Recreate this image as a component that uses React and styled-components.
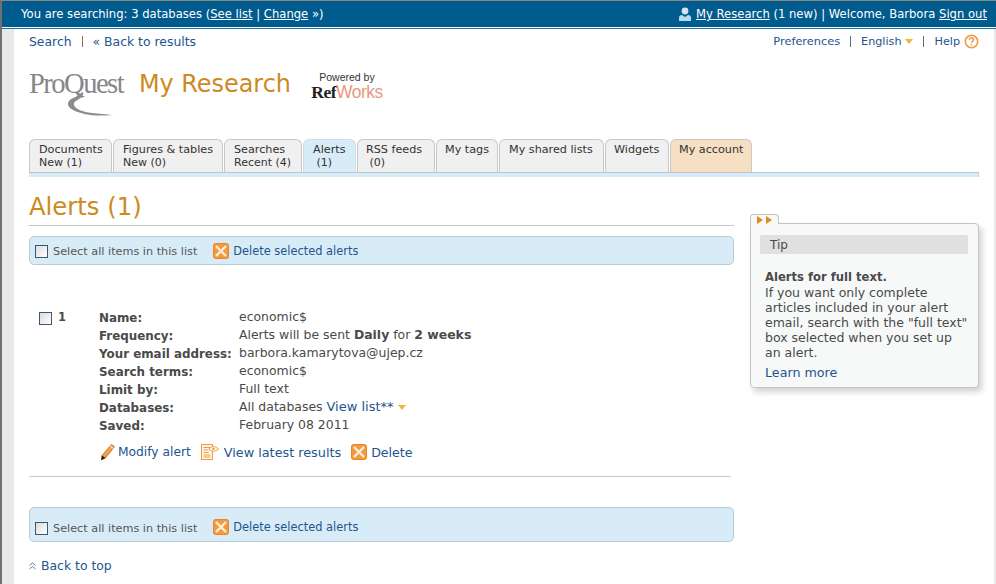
import React from 'react';
import styled, { createGlobalStyle } from 'styled-components';

const GlobalStyle = createGlobalStyle`
    html, body {
        margin: 0;
        padding: 0;
        background: #e8e8e8;
    }
    body {
        font-family: "DejaVu Sans", Verdana, sans-serif;
        font-size: 12px;
        color: #4a4a4a;
    }
`;

const Page = styled.div`
    width: 996px;
    height: 584px;
    overflow: hidden;
    box-sizing: border-box;
    border-top: 1px solid #8a8a80;
    border-left: 2px solid #707070;
    display: flex;
    flex-direction: column;
`;

const TopBar = styled.div`
    height: 26px;
    flex: none;
    background: #005b8e;
    border-bottom: 1px solid #fff;
    box-shadow: 0 1px 0 #1d6f9c;
    color: #fff;
    display: flex;
    justify-content: space-between;
    align-items: center;
    padding: 0 9px 0 19px;
    font-size: 11.6px;
    white-space: nowrap;

    a {
        color: #fff;
        text-decoration: underline;
    }
`;

const TopRight = styled.div`
    display: flex;
    align-items: center;
    gap: 4px;
`;

const Body = styled.div`
    flex: 1;
    margin: 1px 2px 0 12px;
    background: #fff;
    padding: 0 15px;
`;

const NavRow = styled.div`
    display: flex;
    justify-content: space-between;
    align-items: center;
    height: 24px;
`;

const NavGroup = styled.div`
    display: flex;
    align-items: center;
    gap: ${p => p.$gap || 10}px;
    font-size: ${p => p.$size || 12}px;
`;

const Link = styled.a`
    color: #22558f;
    font-size: ${p => p.$size ? `${p.$size}px` : 'inherit'};
    white-space: nowrap;
`;

const Pipe = styled.span`
    width: 1px;
    height: 11px;
    background: ${p => p.$brown ? '#a06a40' : '#5a7088'};
`;

const BrandRow = styled.div`
    display: flex;
    align-items: flex-start;
    height: 71px;
    margin-top: 15px;
`;

const ProQuestLogo = styled.div`
    position: relative;
    width: 110px;
    height: 50px;
    padding-top: 2px;
    box-sizing: border-box;
    color: #87878b;
    font-family: "Liberation Serif", serif;
    font-size: 28.6px;
    letter-spacing: -1.55px;
    line-height: 28px;
    white-space: nowrap;

    svg {
        position: absolute;
        left: 39px;
        top: 24px;
    }
`;

const BrandTitle = styled.div`
    color: #cc8a22;
    font-size: 23.9px;
    line-height: 28px;
    margin-top: 2px;
    white-space: nowrap;
    width: 173px;
`;

const RefBlock = styled.div`
    display: flex;
    flex-direction: column;
    align-items: center;
    width: 70px;
    padding-top: 3px;
`;

const Powered = styled.div`
    color: #333;
    font-family: "Liberation Sans", sans-serif;
    font-size: 10.5px;
    line-height: 12px;
`;

const RefWorks = styled.div`
    font-family: "Liberation Sans", sans-serif;
    font-size: 17.5px;
    line-height: 19px;
    letter-spacing: -.5px;
    white-space: nowrap;
    color: #e9977f;

    b {
        font-family: "Liberation Serif", serif;
        color: #222;
    }
`;

const Tabs = styled.div`
    display: flex;
    gap: 1px;
    height: 33px;
    align-items: stretch;
`;

const Tab = styled.div`
    width: ${p => p.$w}px;
    box-sizing: border-box;
    background: ${p => p.$active ? '#d8ecf7' : p.$account ? '#f7dfc3' : '#f0f0f0'};
    border: 1px solid #c8c8c8;
    border-bottom: none;
    border-color: ${p => p.$active ? '#cddfe9' : '#c8c8c8'};
    border-radius: 6px 6px 0 0;
    color: #333;
    font-size: 11.2px;
    line-height: 13px;
    padding: 3px 0 0 ${p => p.$pad || 9}px;
    white-space: pre;

    small {
        display: block;
        font-size: 11px;
    }
`;

const TabStrip = styled.div`
    height: 4px;
    background: #d8ecf7;
    border-top: 1px solid #b8c8d2;
    border-right: 1px solid #ccc;
`;

const Columns = styled.div`
    display: flex;
    align-items: flex-start;
    justify-content: space-between;
`;

const Main = styled.div`
    width: 705px;
`;

const Heading = styled.h1`
    margin: 16px 0 0;
    height: 32px;
    color: #cc8a22;
    font-size: 24.3px;
    font-weight: 400;
    line-height: 28px;
    border-bottom: 1px solid #c4c4c4;
`;

const ActionBar = styled.div`
    box-sizing: border-box;
    height: ${p => p.$h}px;
    margin-top: ${p => p.$top}px;
    padding: ${p => p.$pt || 0}px 0 0 5px;
    background: #d8ecf7;
    border: 1px solid #b8cad6;
    border-radius: 5px;
    display: flex;
    align-items: center;
`;

const Check = styled.span`
    flex: none;
    width: 11px;
    height: 11px;
    margin-top: ${p => p.$mt || 0}px;
    border: 1px solid #3c5870;
    background: linear-gradient(135deg, #dcdcdc, #fff);
`;

const SelectLabel = styled.span`
    margin: 2px 16px 0 5px;
    font-size: 11.25px;
    color: #555;
    white-space: nowrap;
`;

const IconLink = styled(Link)`
    display: inline-flex;
    align-items: center;
    gap: ${p => p.$gap || 4}px;
    margin-right: ${p => p.$mr || 0}px;
`;

const Item = styled.div`
    display: flex;
    margin-top: 45px;
    padding-left: 10px;
`;

const ItemNum = styled.div`
    width: 60px;
    flex: none;
    display: flex;
    gap: 6px;
    padding-top: 2px;
    font-weight: 700;
    font-size: 11.6px;
    line-height: 11px;
    color: #4a4a4a;
`;

const Fields = styled.dl`
    margin: 0;
    display: grid;
    grid-template-columns: 140px 1fr;
    grid-auto-rows: 18px;
    font-size: 12.45px;
    line-height: 16px;

    dt {
        font-weight: 700;
        font-size: 11.9px;
        white-space: nowrap;
    }

    dd {
        margin: -1px 0 0;
        white-space: nowrap;
    }
`;

const Caret = styled.span`
    display: inline-block;
    width: 0;
    height: 0;
    margin-left: 4px;
    vertical-align: 1px;
    border-left: 4px solid transparent;
    border-right: 4px solid transparent;
    border-top: 5px solid #f2b53a;
`;

const Actions = styled.div`
    display: flex;
    align-items: center;
    height: 20px;
    margin: 6px 0 0 1px;
`;

const Rule = styled.div`
    height: 1px;
    width: 702px;
    background: #c8c8c8;
    margin-top: 14px;
`;

const BackTop = styled(Link)`
    display: flex;
    align-items: center;
    gap: 5px;
    margin-top: 16px;
    font-size: 12.4px;
    line-height: 16px;
`;

const TipWrap = styled.div`
    width: 229px;
    margin: 37px 0 0 0;
    position: relative;
`;

const TipTab = styled.div`
    width: 29px;
    height: 10px;
    box-sizing: border-box;
    margin-bottom: -1px;
    position: relative;
    z-index: 1;
    background: #f7f9f9;
    border: 1px solid #c4c4c4;
    border-bottom: none;
    border-radius: 4px 4px 0 0;
    display: flex;
    gap: 3px;
    padding: 1px 0 0 6px;

    i {
        width: 0;
        height: 0;
        border-left: 6px solid #e08a1e;
        border-top: 4px solid transparent;
        border-bottom: 4px solid transparent;
    }
`;

const TipBox = styled.div`
    box-sizing: border-box;
    height: 165px;
    background: #f7f9f9;
    border: 1px solid #c4c4c4;
    border-radius: 0 4px 4px 4px;
    box-shadow: 3px 4px 6px rgba(0, 0, 0, .18);
    padding: 11px 10px 0 9px;
`;

const TipTitle = styled.div`
    height: 19px;
    background: #e0e0e0;
    border-radius: 2px 2px 0 0;
    font-size: 12px;
    line-height: 21px;
    padding-left: 10px;
`;

const TipText = styled.div`
    margin: 15px 0 0 5px;
    font-size: 12.5px;
    line-height: 15px;
    white-space: nowrap;

    b {
        font-size: 11.6px;
    }
`;

const TipMore = styled(Link)`
    display: block;
    margin: 5px 0 0 5px;
    font-size: 12.7px;
    line-height: 16px;
`;

const HelpIcon = () => (
    <svg width="15" height="15" viewBox="0 0 15 15">
        <circle cx="7.5" cy="7.5" r="6.2" fill="#fff" stroke="#ee9a45" strokeWidth="1.6" />
        <path d="M5.4 5.8c0-1.3 1-2 2.1-2s2.1.7 2.1 1.9c0 1.5-2 1.6-2 3.2" fill="none" stroke="#ee9a45" strokeWidth="1.5" />
        <rect x="6.8" y="10" width="1.5" height="1.5" fill="#ee9a45" />
    </svg>
);

const PersonIcon = () => (
    <svg width="14" height="15" viewBox="0 0 14 15">
        <circle cx="7" cy="4" r="3.4" fill="#cfe6f3" />
        <path d="M1 14V10.5C1 8.8 2.6 8 4 8l3 2 3-2c1.4 0 3 .8 3 2.5V14z" fill="#b7d9ec" />
    </svg>
);

const DeleteIcon = () => (
    <svg width="16" height="16" viewBox="0 0 16 16">
        <rect x=".5" y=".5" width="15" height="15" rx="2" fill="#f59a3c" stroke="#e8842a" />
        <path d="M3 3l10 10M13 3L3 13" stroke="#fdeedd" strokeWidth="2.4" />
    </svg>
);

const PencilIcon = () => (
    <svg width="15" height="17" viewBox="0 0 15 17">
        <path d="M11.500 .5l3 2.200-9 11.300-4.200 2L2 11.500z" fill="#f2a24a" stroke="#b8691c" strokeWidth=".8" />
        <path d="M2 11.500l3.500 2.500-4.200 2z" fill="#222" />
        <path d="M10.300 2.200l3 2.200" stroke="#fff" strokeWidth="1" />
    </svg>
);

const ResultsIcon = () => (
    <svg width="18" height="16" viewBox="0 0 18 16">
        <rect x=".5" y=".5" width="11" height="15" fill="#fff6e8" stroke="#ef9d3f" />
        <path d="M2.5 3.5h7M2.5 6h5M2.5 8.5h5M2.5 11h7M2.5 13h7" stroke="#ef9d3f" />
        <path d="M8 5c2-3 6-3 9.500 0-3.500 3-7.500 3-9.500 0z" fill="#fff" stroke="#ef9d3f" />
        <circle cx="12.500" cy="5" r="1.300" fill="#ef9d3f" />
    </svg>
);

const ChevronsUp = () => (
    <svg width="7" height="8" viewBox="0 0 7 8">
        <path d="M.5 3.500L3.500 1l3 2.500M.5 7L3.500 4.500l3 2.500" fill="none" stroke="#5f7f9f" />
    </svg>
);

const Swoosh = () => (
    <svg width="44" height="24" viewBox="0 0 44 24">
        <path d="M15 0c1 3-1 5-4 7-3 2-6 3-5 6 1 4 9 7 18 8 7 1 14 1 20 2-10 1-22 1-31-2C5 19-1 15 0 11c1-4 6-5 9-7 2-1 3-3 6-4z" fill="#8c8c90" />
    </svg>
);

const Toolbar = ({ height, top, pt }) => (
    <ActionBar $h={height} $top={top} $pt={pt}>
        <Check $mt={2} />
        <SelectLabel>Select all items in this list</SelectLabel>
        <IconLink $size={11.4}><DeleteIcon />Delete selected alerts</IconLink>
    </ActionBar>
);

const tabs = [
    { w: 83, a: 'Documents', b: 'New (1)' },
    { w: 110, a: 'Figures & tables', b: 'New (0)' },
    { w: 78, a: 'Searches', b: 'Recent (4)' },
    { w: 53, a: 'Alerts', b: ' (1)', active: true },
    { w: 78, a: 'RSS feeds', b: ' (0)', pad: 8 },
    { w: 62, a: 'My tags', pad: 8 },
    { w: 105, a: 'My shared lists' },
    { w: 64, a: 'Widgets', pad: 8 },
    { w: 82, a: 'My account', account: true, pad: 8 }
];

const fields = [
    ['Name:', 'economic$'],
    ['Frequency:', <>Alerts will be sent <b>Daily</b> for <b>2 weeks</b></>],
    ['Your email address:', 'barbora.kamarytova@ujep.cz'],
    ['Search terms:', 'economic$'],
    ['Limit by:', 'Full text'],
    ['Databases:', <>All databases <Link $size={13}>View list**</Link><Caret /></>],
    ['Saved:', 'February 08 2011']
];

const App = () => (
    <Page>
        <GlobalStyle />
        <TopBar>
            <div>You are searching: 3 databases (<a>See list</a> | <a>Change</a> »)</div>
            <TopRight>
                <PersonIcon />
                <span><a>My Research</a> (1 new) | Welcome, Barbora <a>Sign out</a></span>
            </TopRight>
        </TopBar>
        <Body>
            <NavRow>
                <NavGroup>
                    <Link $size={12.4}>Search</Link>
                    <Pipe $brown />
                    <Link $size={12.4}>« Back to results</Link>
                </NavGroup>
                <NavGroup $size={11.2}>
                    <Link $size={11.35}>Preferences</Link>
                    <Pipe />
                    <Link>English<Caret /></Link>
                    <Pipe />
                    <NavGroup $gap={4} $size={11.2}>
                        <Link>Help</Link>
                        <HelpIcon />
                    </NavGroup>
                </NavGroup>
            </NavRow>
            <BrandRow>
                <ProQuestLogo>ProQuest<Swoosh /></ProQuestLogo>
                <BrandTitle>My Research</BrandTitle>
                <RefBlock>
                    <Powered>Powered by</Powered>
                    <RefWorks><b>Ref</b>Works</RefWorks>
                </RefBlock>
            </BrandRow>
            <Tabs>
                {tabs.map(t => (
                    <Tab key={t.a} $w={t.w} $active={t.active} $account={t.account} $pad={t.pad}>
                        {t.a}
                        {t.b && <small>{t.b}</small>}
                    </Tab>
                ))}
            </Tabs>
            <TabStrip />
            <Columns>
                <Main>
                    <Heading>Alerts (1)</Heading>
                    <Toolbar height={29} top={10} />
                    <Item>
                        <ItemNum><Check />1</ItemNum>
                        <div>
                            <Fields>
                                {fields.map(([k, v]) => (
                                    <React.Fragment key={k}>
                                        <dt>{k}</dt>
                                        <dd>{v}</dd>
                                    </React.Fragment>
                                ))}
                            </Fields>
                            <Actions>
                                <IconLink $size={12.25} $gap={3} $mr={10}><PencilIcon />Modify alert</IconLink>
                                <IconLink $size={12.8} $gap={5} $mr={10}><ResultsIcon />View latest results</IconLink>
                                <IconLink $size={12.6}><DeleteIcon />Delete</IconLink>
                            </Actions>
                        </div>
                    </Item>
                    <Rule />
                    <Toolbar height={35} top={30} pt={5} />
                    <BackTop><ChevronsUp />Back to top</BackTop>
                </Main>
                <TipWrap>
                    <TipTab><i /><i /></TipTab>
                    <TipBox>
                        <TipTitle>Tip</TipTitle>
                        <TipText>
                            <b>Alerts for full text.</b><br />
                            If you want only complete<br />
                            articles included in your alert<br />
                            email, search with the "full text"<br />
                            box selected when you set up<br />
                            an alert.
                        </TipText>
                        <TipMore>Learn more</TipMore>
                    </TipBox>
                </TipWrap>
            </Columns>
        </Body>
    </Page>
);

export default App;
